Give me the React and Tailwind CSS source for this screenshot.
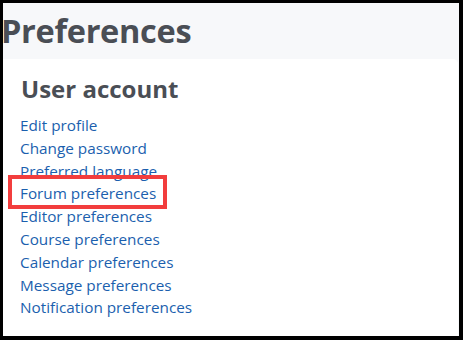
import React from "react";

const links = [
  "Edit profile",
  "Change password",
  "Preferred language",
  "Forum preferences",
  "Editor preferences",
  "Course preferences",
  "Calendar preferences",
  "Message preferences",
  "Notification preferences",
];

const App = () => {
  return (
    <div className="w-[463px] h-[340px] bg-black pt-[3px] pl-[3px] pr-[4px] pb-[4px] overflow-hidden">
      <div
        className="h-full bg-[#f7f8fa] flex flex-col"
        style={{ fontFamily: "'Open Sans', 'Liberation Sans', sans-serif" }}
      >
        {/* Page header */}
        <div className="h-[56px] flex items-center">
          <h1 className="text-[32.5px] font-bold leading-none text-[#4a4e55] tracking-[-0.3px] -ml-[2px] mt-[1px]">
            Preferences
          </h1>
        </div>

        {/* Card */}
        <div className="relative flex-1 bg-white rounded-tr-[5px] mr-px pl-[17px] pt-[18px]">
          <h2 className="text-[24px] font-bold leading-none text-[#4a4e55] ml-px">
            User account
          </h2>
          <ul className="mt-[13px] flex flex-col">
            {links.map((label) => (
              <li key={label} className="h-[22.8px] leading-[22px]">
                <a href="#" className="text-[15.3px] text-[#1b5fae]">
                  {label}
                </a>
              </li>
            ))}
          </ul>

          {/* highlight box */}
          <div className="absolute left-[5px] top-[116px] w-[159px] h-[34px] border-4 border-[#f23d3d]" />
        </div>
      </div>
    </div>
  );
};

export default App;
